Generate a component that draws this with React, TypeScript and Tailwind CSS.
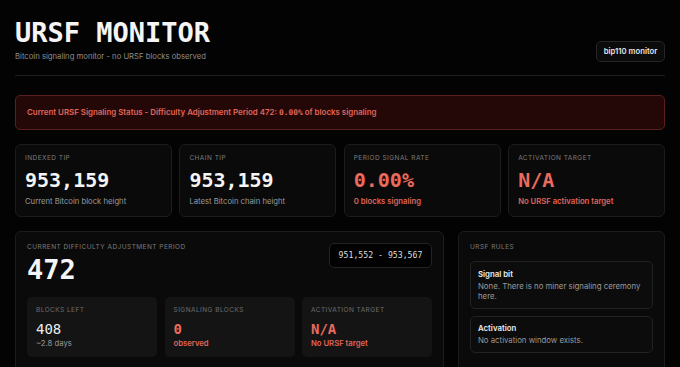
const sans = "font-['Inter','Noto_Sans',sans-serif]";
const mono = "font-['DejaVu_Sans_Mono','Liberation_Mono',monospace]";

// 상단 통계 카드
const StatCard = ({
  label,
  value,
  sub,
  alert,
}: {
  label: string;
  value: string;
  sub: string;
  alert?: boolean;
}) => (
  <div className="h-[73px] rounded-[6px] border border-[#1c1c1c] bg-[#0a0a0a] px-[9px] pt-[9px]">
    <div className="text-[6.5px] leading-[9px] uppercase tracking-[0.07em] text-[#7c7c7c]">
      {label}
    </div>
    <div
      className={`${mono} mt-[5px] text-[20px] leading-[24px] font-bold ${
        alert ? "text-[#ea6b5d]" : "text-[#f4f4f4]"
      }`}
    >
      {value}
    </div>
    <div
      className={`mt-[4px] text-[7.7px] leading-[12px] ${
        alert ? "font-semibold text-[#e0665a]" : "text-[#9a9a9a]"
      }`}
    >
      {sub}
    </div>
  </div>
);

// 기간 내부 작은 카드
const MiniCard = ({
  label,
  value,
  sub,
  alert,
}: {
  label: string;
  value: string;
  sub: string;
  alert?: boolean;
}) => (
  <div className="h-[60px] rounded-[5px] bg-[#141414] px-[9px] pt-[9px]">
    <div className="text-[6.5px] leading-[9px] uppercase tracking-[0.07em] text-[#6e6e6e]">
      {label}
    </div>
    <div
      className={`${mono} mt-[6px] text-[14px] leading-[17px] ${
        alert ? "font-bold text-[#ea6b5d]" : "text-[#ececec]"
      }`}
    >
      {value}
    </div>
    <div
      className={`text-[7.7px] leading-[11px] ${
        alert ? "font-semibold text-[#e0665a]" : "text-[#9a9a9a]"
      }`}
    >
      {sub}
    </div>
  </div>
);

// 규칙 항목
const Rule = ({ title, text }: { title: string; text: string }) => (
  <div className="rounded-[5px] border border-[#222] bg-[#0c0c0c] px-[7px] pt-[6.5px] pb-[6px]">
    <div className="text-[7.8px] leading-[11px] font-semibold text-[#ededed]">{title}</div>
    <div className="mt-[1px] text-[7.8px] leading-[10.7px] text-[#9a9a9a]">{text}</div>
  </div>
);

export default function App() {
  return (
    <div className={`${sans} min-h-screen bg-[#030303] px-[15px] text-white`}>
      <div className="flex items-end justify-between border-b border-[#1e1e1e] pt-[19px] pb-[12px]">
        <div>
          <h1 className={`${mono} text-[27px] leading-[27px] font-bold text-[#f5f5f5]`}>
            URSF MONITOR
          </h1>
          <p className="mt-[5px] text-[7.7px] leading-[12px] text-[#8d8d8d]">
            Bitcoin signaling monitor - no URSF blocks observed
          </p>
        </div>
        <div className="mb-[1px] flex h-[21px] w-[69px] items-center justify-center rounded-[5px] border border-[#262626] bg-[#0b0b0b] text-[7.7px] font-semibold text-[#e8e8e8]">
          bip110 monitor
        </div>
      </div>

      <div className="mt-[19px] flex h-[35px] items-center rounded-[5px] border border-[#5a2020] bg-[#240808] px-[11px] text-[7.9px] font-semibold text-[#e0665a]">
        <span>
          Current URSF Signaling Status - Difficulty Adjustment Period 472:{" "}
          <span className={`${mono} font-bold`}>0.00%</span> of blocks signaling
        </span>
      </div>

      <div className="mt-[14px] grid grid-cols-4 gap-[7.5px]">
        <StatCard label="Indexed Tip" value="953,159" sub="Current Bitcoin block height" />
        <StatCard label="Chain Tip" value="953,159" sub="Latest Bitcoin chain height" />
        <StatCard label="Period Signal Rate" value="0.00%" sub="0 blocks signaling" alert />
        <StatCard label="Activation Target" value="N/A" sub="No URSF activation target" alert />
      </div>

      <div className="mt-[14px] grid grid-cols-[minmax(0,1fr)_207px] gap-[14px]">
        <div className="h-[150px] rounded-[6px] border border-[#1c1c1c] bg-[#0a0a0a] px-[11px] pt-[11px]">
          <div className="flex items-start justify-between">
            <div>
              <div className="text-[6.5px] leading-[9px] uppercase tracking-[0.07em] text-[#7c7c7c]">
                Current Difficulty Adjustment Period
              </div>
              <div className={`${mono} mt-[4px] text-[27px] leading-[27px] font-bold text-[#f5f5f5]`}>
                472
              </div>
            </div>
            <div
              className={`${mono} flex h-[25px] w-[103px] items-center justify-center rounded-[5px] border border-[#232323] bg-[#020202] text-[8.2px] text-[#dcdcdc]`}
            >
              951,552 - 953,567
            </div>
          </div>
          <div className="mt-[14px] grid grid-cols-3 gap-[7.5px]">
            <MiniCard label="Blocks Left" value="408" sub="~2.8 days" />
            <MiniCard label="Signaling Blocks" value="0" sub="observed" alert />
            <MiniCard label="Activation Target" value="N/A" sub="No URSF target" alert />
          </div>
        </div>

        <div className="h-[150px] rounded-[6px] border border-[#1c1c1c] bg-[#0a0a0a] px-[11px] pt-[11px]">
          <div className="text-[6.5px] leading-[9px] uppercase tracking-[0.07em] text-[#7c7c7c]">
            URSF Rules
          </div>
          <div className="mt-[9px] flex flex-col gap-[7px]">
            <Rule title="Signal bit" text="None. There is no miner signaling ceremony here." />
            <Rule title="Activation" text="No activation window exists." />
          </div>
        </div>
      </div>
    </div>
  );
}
